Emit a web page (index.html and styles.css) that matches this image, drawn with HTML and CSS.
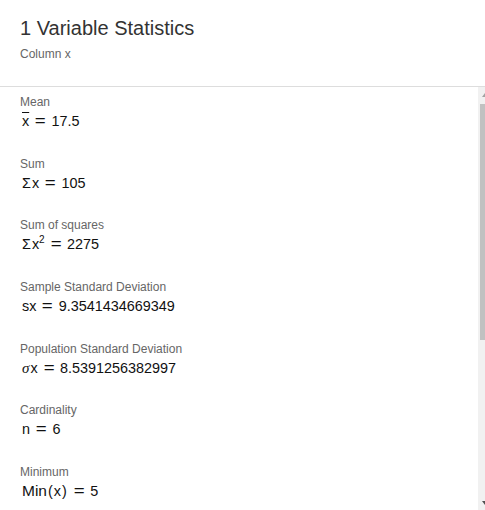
FILE: index.html
```html
<!DOCTYPE html>
<html>
<head>
<meta charset="utf-8">
<link rel="stylesheet" href="styles.css">
</head>
<body>
<div class="panel">
  <header class="head">
    <h1 class="title">1 Variable Statistics</h1>
    <div class="subtitle">Column x</div>
  </header>
  <div class="body">
    <div class="list">
      <div class="stat">
        <div class="label">Mean</div>
        <div class="value"><span class="bar">x</span><span class="eq">=</span>17.5</div>
      </div>
      <div class="stat">
        <div class="label">Sum</div>
        <div class="value"><span class="sig">Σ</span>x<span class="eq">=</span>105</div>
      </div>
      <div class="stat">
        <div class="label">Sum of squares</div>
        <div class="value"><span class="sig">Σ</span>x<sup class="sup">2</sup><span class="eq">=</span>2275</div>
      </div>
      <div class="stat">
        <div class="label">Sample Standard Deviation</div>
        <div class="value">sx<span class="eq">=</span>9.3541434669349</div>
      </div>
      <div class="stat">
        <div class="label">Population Standard Deviation</div>
        <div class="value"><span class="sigma">σ</span>x<span class="eq">=</span>8.5391256382997</div>
      </div>
      <div class="stat">
        <div class="label">Cardinality</div>
        <div class="value">n<span class="eq">=</span>6</div>
      </div>
      <div class="stat">
        <div class="label">Minimum</div>
        <div class="value"><span class="fn">Min</span><span class="par">(</span>x<span class="par">)</span><span class="eq">=</span>5</div>
      </div>
    </div>
    <div class="scrollbar">
      <div class="arrow arrow-up"></div>
      <div class="thumb"></div>
      <div class="arrow arrow-down"></div>
    </div>
  </div>
</div>
</body>
</html>
```
FILE: styles.css
```css
html, body {
  margin: 0;
  padding: 0;
  background: #ffffff;
  overflow: hidden;
}
body {
  font-family: "Liberation Sans", Arial, sans-serif;
  color: #333333;
}
.panel {
  width: 485px;
  height: 510px;
  display: flex;
  flex-direction: column;
}
.head {
  padding: 16px 20px 0 20px;
  height: 70px;
  border-bottom: 1px solid #dddddd;
  flex: none;
}
.title {
  margin: 0;
  font-size: 20px;
  font-weight: normal;
  line-height: 24px;
  color: #333333;
}
.subtitle {
  margin-top: 7px;
  font-size: 12px;
  line-height: 14px;
  color: #666666;
}
.body {
  position: relative;
  flex: 1;
  overflow: hidden;
}
.list {
  padding: 0 20px;
}
.stat {
  padding-top: 8px;
  height: 53.7px;
}
.label {
  font-size: 12px;
  line-height: 14px;
  color: #666666;
}
.value {
  margin-top: 3px;
  padding-left: 2px;
  font-size: 14.4px;
  line-height: 18px;
  color: #111111;
}
.eq {
  margin: 0 7px;
  display: inline-block;
  transform: scaleX(1.3);
}
.bar {
  text-decoration: overline;
  text-decoration-thickness: 1px;
}
.sig {
  margin-right: 1px;
}
.sigma {
  font-family: "Liberation Serif", "Times New Roman", serif;
  font-style: italic;
  font-size: 15px;
  margin-right: 1px;
}
.fn {
  font-size: 15.5px;
}
.par {
  margin: 0 1px;
}
.sup {
  font-size: 10px;
  vertical-align: 6px;
  line-height: 0;
}
.scrollbar {
  position: absolute;
  top: 0;
  bottom: 0;
  left: 478px;
  width: 15px;
  background: #f1f1f1;
}
.thumb {
  position: absolute;
  top: 17px;
  left: 2px;
  width: 11px;
  height: 236px;
  background: #c1c1c1;
}
.arrow {
  position: absolute;
  left: 4px;
  width: 0;
  height: 0;
  border-left: 3.5px solid transparent;
  border-right: 3.5px solid transparent;
}
.arrow-up {
  top: 6px;
  border-bottom: 4px solid #a3a3a3;
}
.arrow-down {
  bottom: 5px;
  border-top: 4px solid #505050;
}
```
